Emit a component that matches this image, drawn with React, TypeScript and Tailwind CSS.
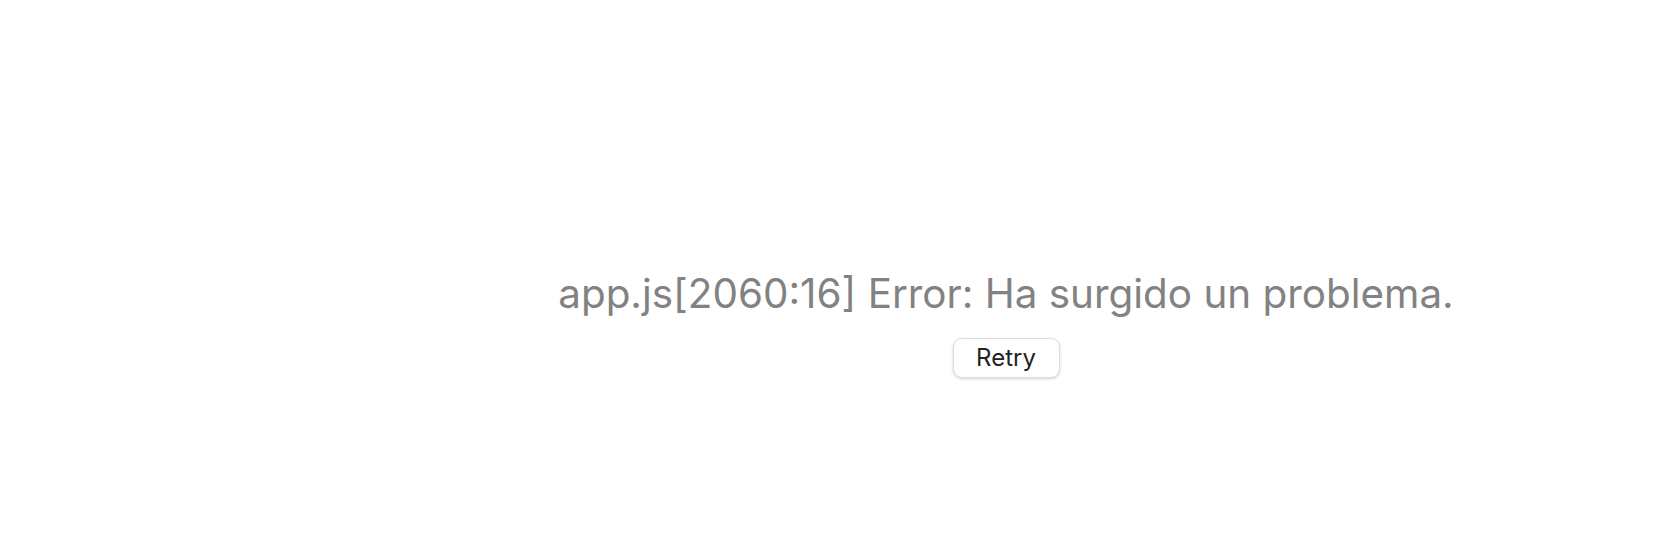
export default function App() {
  return (
    <div className="flex h-[538px] w-full bg-white" style={{ fontFamily: "Inter, 'Liberation Sans', sans-serif" }}>
      <div className="w-[334px] shrink-0" />
      <div className="flex flex-1 flex-col items-center pt-[270px]">
        <p className="text-[40.4px] leading-[48px] text-[#828282]">app.js[2060:16] Error: Ha surgido un problema.</p>
        <button className="mt-[20px] h-[40px] w-[107px] rounded-[9px] border border-[#dedede] bg-white text-[24px] leading-[30px] text-[#222222] shadow-[0_1px_3px_rgba(0,0,0,0.18)]">
          Retry
        </button>
      </div>
    </div>
  )
}
